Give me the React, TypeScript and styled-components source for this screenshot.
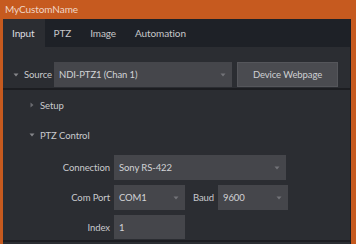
import styled, { createGlobalStyle } from "styled-components";

const GlobalStyle = createGlobalStyle`
    html, body {
        margin: 0;
        padding: 0;
        background: #c65a1f;
    }
    * {
        box-sizing: border-box;
    }
`

const Caret = ({ dir = "down", dim }: { dir?: "down" | "right", dim?: boolean }) => (
    <svg width="6" height="6" viewBox="0 0 6 6">
        {dir === "down"
            ? <polygon points="0.5,1.5 5.5,1.5 3,4.5" fill={dim ? "#727378" : "#85868a"}/>
            : <polygon points="1.5,0.5 4.5,3 1.5,5.5" fill="#6a6b70"/>}
    </svg>
)

export default function App() {
    return (
        <>
            <GlobalStyle/>
            <Frame>
                <TitleBar>MyCustomName</TitleBar>
                <Panel>
                    <TabBar>
                        <Tab active>Input</Tab>
                        <Tab>PTZ</Tab>
                        <Tab>Image</Tab>
                        <Tab>Automation</Tab>
                    </TabBar>
                    <Content>
                        <SourceRow>
                            <Caret/>
                            <RowLabel>Source</RowLabel>
                            <Select width={178}>
                                <span>NDI-PTZ1 (Chan 1)</span>
                                <Caret dim/>
                            </Select>
                            <Button>Device Webpage</Button>
                        </SourceRow>
                        <Section>
                            <Caret dir="right"/>
                            <span>Setup</span>
                        </Section>
                        <Section>
                            <Caret/>
                            <span>PTZ Control</span>
                        </Section>
                        <Form>
                            <FieldLabel>Connection</FieldLabel>
                            <Select width={172}>
                                <span>Sony RS-422</span>
                                <Caret dim/>
                            </Select>
                            <FieldLabel>Com Port</FieldLabel>
                            <Inline>
                                <Select width={71}>
                                    <span>COM1</span>
                                    <Caret dim/>
                                </Select>
                                <InlineLabel>Baud</InlineLabel>
                                <Select width={70}>
                                    <span>9600</span>
                                    <Caret dim/>
                                </Select>
                            </Inline>
                            <FieldLabel>Index</FieldLabel>
                            <Input width={71}>1</Input>
                        </Form>
                    </Content>
                </Panel>
            </Frame>
        </>
    );
}

const Frame = styled.div`
    width: 356px;
    height: 244px;
    padding: 0 5px 0 3px;
    display: flex;
    flex-direction: column;
    background: #c65a1f;
    font-family: Lato, "Open Sans", sans-serif;
    font-size: 9.5px;
    letter-spacing: -0.1px;
    color: #c9cacd;
    overflow: hidden;
`

const TitleBar = styled.div`
    height: 19px;
    padding: 0 0 1px 2px;
    display: flex;
    align-items: center;
    color: #f0d6c6;
    font-size: 10px;
`

const Panel = styled.div`
    flex: 1;
    display: flex;
    flex-direction: column;
    background: #2b2d32;
    border-right: 1px solid #1c1d21;
`

const TabBar = styled.div`
    height: 28px;
    display: flex;
    background: #1e2127;
`

const Tab = styled.div<{ active?: boolean }>`
    display: flex;
    align-items: center;
    padding: 0 10px 0 9px;
    background: ${p => p.active ? "#2b2d32" : "transparent"};
    color: ${p => p.active ? "#dcdde0" : "#c6c7ca"};
    font-size: 10px;
`

const Content = styled.div`
    flex: 1;
    display: flex;
    flex-direction: column;
    padding-top: 15px;
    border-bottom: 2px solid #1d1e22;
    margin-bottom: 2px;
`

const SourceRow = styled.div`
    display: flex;
    align-items: center;
    gap: 5px;
    padding: 0 0 1px 10px;
    border-bottom: 2px solid #1c1d21;
`

const RowLabel = styled.span`
    width: 26px;
    margin-right: -1px;
`

const Select = styled.div<{ width: number }>`
    width: ${p => p.width}px;
    height: 25px;
    display: flex;
    align-items: center;
    justify-content: space-between;
    padding: 0 6px 0 5px;
    background: #45464b;
    color: #d2d3d6;
`

const Input = styled.div<{ width: number }>`
    width: ${p => p.width}px;
    height: 24px;
    display: flex;
    align-items: center;
    padding: 0 5px;
    background: #45464b;
    color: #d2d3d6;
`

const Button = styled.div`
    width: 101px;
    height: 25px;
    display: flex;
    align-items: center;
    justify-content: center;
    background: #4a4b50;
    border: 1px solid #55565b;
    color: #cfd0d3;
`

const Section = styled.div`
    height: 30px;
    display: flex;
    align-items: center;
    gap: 5px;
    padding-left: 26px;
`

const Form = styled.div`
    display: grid;
    grid-template-columns: 107px auto;
    justify-content: start;
    align-items: center;
    column-gap: 4px;
    row-gap: 5px;
    margin-top: 5px;
`

const FieldLabel = styled.span`
    text-align: right;
`

const Inline = styled.div`
    display: flex;
    align-items: center;
`

const InlineLabel = styled.span`
    margin: 0 4px 0 8px;
`
